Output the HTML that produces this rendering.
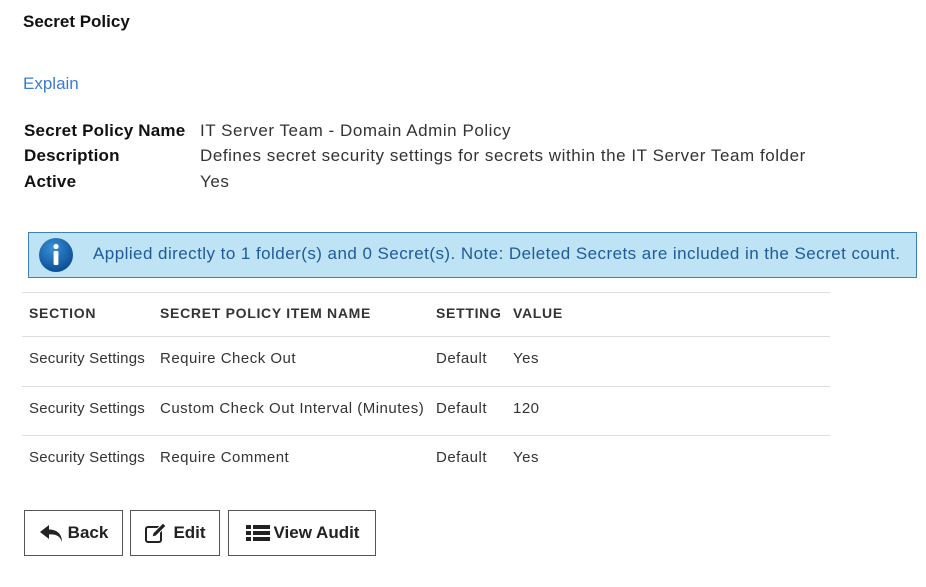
<!DOCTYPE html>
<html><head><style>
body{margin:0;background:#fff;font-family:"Liberation Sans",Arial,sans-serif;color:#222;width:926px;height:587px;position:relative;overflow:hidden}
.a{position:absolute;white-space:nowrap}
.h{font-weight:bold;font-size:17px;color:#111}
.lbl{font-weight:bold;font-size:17px;color:#111;letter-spacing:0.2px}
.val{font-size:17px;color:#333;letter-spacing:0.55px}
.box{position:absolute;left:28px;top:232px;width:887px;height:44px;background:#bde3f5;border:1px solid #3d7fb6}
.th{font-weight:bold;font-size:14px;color:#333;letter-spacing:0.7px}
.td{font-size:15px;color:#333;letter-spacing:0.5px}
.sec{font-size:15px;letter-spacing:0.2px}
.line{position:absolute;left:22px;width:808px;height:1px;background:#ddd}
.btn{position:absolute;top:510px;border:1px solid #555;background:#fff;font-weight:bold;font-size:17px;color:#222;display:flex;align-items:center;justify-content:center;gap:3px;box-sizing:border-box;height:46px}
</style></head><body>
<div class="a h" style="left:23px;top:12px">Secret Policy</div>
<div class="a" style="left:23px;top:74px;font-size:17px;color:#3b7bd4">Explain</div>
<div class="a lbl" style="left:24px;top:121px">Secret Policy Name</div>
<div class="a val" style="left:200px;top:121px">IT Server Team - Domain Admin Policy</div>
<div class="a lbl" style="left:24px;top:146px">Description</div>
<div class="a val" style="left:200px;top:146px">Defines secret security settings for secrets within the IT Server Team folder</div>
<div class="a lbl" style="left:24px;top:172px">Active</div>
<div class="a val" style="left:200px;top:172px">Yes</div>
<div class="box">
<svg style="position:absolute;left:9px;top:4px" width="36" height="36" viewBox="0 0 36 36"><defs><radialGradient id="g" cx="40%" cy="30%" r="70%"><stop offset="0" stop-color="#3a8fd8"/><stop offset="1" stop-color="#0a4f95"/></radialGradient></defs><circle cx="18" cy="18" r="17" fill="url(#g)"/><circle cx="18" cy="9.5" r="2.6" fill="#fff"/><rect x="15.6" y="14" width="4.8" height="14" rx="1" fill="#fff"/></svg>
<div class="a" style="left:64px;top:11px;font-size:17px;letter-spacing:0.45px;color:#1f5a9a">Applied directly to 1 folder(s) and 0 Secret(s). Note: Deleted Secrets are included in the Secret count.</div>
</div>
<div class="line" style="top:292px"></div>
<div class="a th" style="left:29px;top:305px">SECTION</div>
<div class="a th" style="left:160px;top:305px">SECRET POLICY ITEM NAME</div>
<div class="a th" style="left:436px;top:305px">SETTING</div>
<div class="a th" style="left:513px;top:305px">VALUE</div>
<div class="line" style="top:336px"></div>
<div class="a td sec" style="left:29px;top:350px">Security Settings</div><div class="a td" style="left:160px;top:350px">Require Check Out</div><div class="a td" style="left:436px;top:350px">Default</div><div class="a td" style="left:513px;top:350px">Yes</div>
<div class="line" style="top:386px"></div>
<div class="a td sec" style="left:29px;top:400px">Security Settings</div><div class="a td" style="left:160px;top:400px">Custom Check Out Interval (Minutes)</div><div class="a td" style="left:436px;top:400px">Default</div><div class="a td" style="left:513px;top:400px">120</div>
<div class="line" style="top:435px"></div>
<div class="a td sec" style="left:29px;top:449px">Security Settings</div><div class="a td" style="left:160px;top:449px">Require Comment</div><div class="a td" style="left:436px;top:449px">Default</div><div class="a td" style="left:513px;top:449px">Yes</div>
<div class="btn" style="left:24px;width:99px"><svg width="26" height="20" viewBox="0 0 26 20"><path d="M10 2 L1 9 L10 16 V11.5 C17 11 21 13 23 19 C23 11 18 6.5 10 6.5 Z" fill="#222"/></svg>Back</div>
<div class="btn" style="left:130px;width:90px"><svg width="26" height="22" viewBox="0 0 26 22"><rect x="2" y="5" width="15" height="15" rx="2" fill="none" stroke="#222" stroke-width="2"/><path d="M8 15 L9 11 L19 1 L22 4 L12 14 Z" fill="#222" stroke="#fff" stroke-width="1"/></svg>Edit</div>
<div class="btn" style="left:228px;width:148px"><svg width="26" height="20" viewBox="0 0 26 20"><rect x="1" y="2" width="5" height="4" fill="#222"/><rect x="8" y="2" width="17" height="4" fill="#222"/><rect x="1" y="8" width="5" height="4" fill="#222"/><rect x="8" y="8" width="17" height="4" fill="#222"/><rect x="1" y="14" width="5" height="4" fill="#222"/><rect x="8" y="14" width="17" height="4" fill="#222"/></svg>View Audit</div>
</body></html>
